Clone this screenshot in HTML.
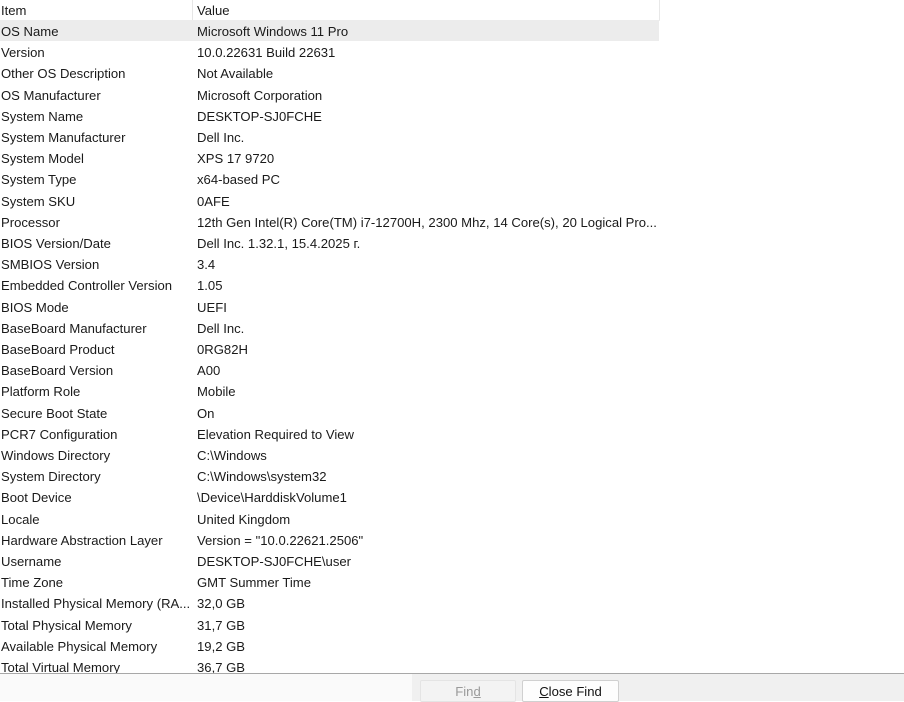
<!DOCTYPE html>
<html><head><style>
body{margin:0;width:904px;height:700px;background:#fff;overflow:hidden;position:relative;font-family:"Liberation Sans",sans-serif;font-size:13.1px;color:#1a1a1a}
.r{position:absolute;left:0;width:659px;height:21px;line-height:23px;white-space:nowrap}
.r span{position:absolute}
.a{left:1px}.b{left:197px}
.sel{background:#ececec}
#hdr{position:absolute;left:0;top:0;width:659px;height:20px;border-right:1px solid #e8e8e8;border-bottom:1px solid #f2f2f2}
#sep{position:absolute;left:192px;top:0;width:1px;height:20px;background:#e6e6e6}
#bar{position:absolute;left:0;top:673px;width:904px;height:27px;background:#f0f0f0;border-top:1px solid #a8a8a8}
.btn{position:absolute;top:6px;height:20px;line-height:21px;text-align:center;border:1px solid #d0d0d0;border-radius:2px;font-size:13.1px}
</style></head><body>
<div id="hdr"></div><div id="sep"></div>
<div class="r" style="top:-1px"><span class="a">Item</span><span class="b">Value</span></div>
<div class="r sel" style="top:20px"><span class="a">OS Name</span><span class="b">Microsoft Windows 11 Pro</span></div>
<div class="r" style="top:41.2px"><span class="a">Version</span><span class="b">10.0.22631 Build 22631</span></div>
<div class="r" style="top:62.4px"><span class="a">Other OS Description</span><span class="b">Not Available</span></div>
<div class="r" style="top:83.6px"><span class="a">OS Manufacturer</span><span class="b">Microsoft Corporation</span></div>
<div class="r" style="top:104.8px"><span class="a">System Name</span><span class="b">DESKTOP-SJ0FCHE</span></div>
<div class="r" style="top:126px"><span class="a">System Manufacturer</span><span class="b">Dell Inc.</span></div>
<div class="r" style="top:147.2px"><span class="a">System Model</span><span class="b">XPS 17 9720</span></div>
<div class="r" style="top:168.4px"><span class="a">System Type</span><span class="b">x64-based PC</span></div>
<div class="r" style="top:189.6px"><span class="a">System SKU</span><span class="b">0AFE</span></div>
<div class="r" style="top:210.8px"><span class="a">Processor</span><span class="b">12th Gen Intel(R) Core(TM) i7-12700H, 2300 Mhz, 14 Core(s), 20 Logical Pro...</span></div>
<div class="r" style="top:232px"><span class="a">BIOS Version/Date</span><span class="b">Dell Inc. 1.32.1, 15.4.2025 г.</span></div>
<div class="r" style="top:253.2px"><span class="a">SMBIOS Version</span><span class="b">3.4</span></div>
<div class="r" style="top:274.4px"><span class="a">Embedded Controller Version</span><span class="b">1.05</span></div>
<div class="r" style="top:295.6px"><span class="a">BIOS Mode</span><span class="b">UEFI</span></div>
<div class="r" style="top:316.8px"><span class="a">BaseBoard Manufacturer</span><span class="b">Dell Inc.</span></div>
<div class="r" style="top:338px"><span class="a">BaseBoard Product</span><span class="b">0RG82H</span></div>
<div class="r" style="top:359.2px"><span class="a">BaseBoard Version</span><span class="b">A00</span></div>
<div class="r" style="top:380.4px"><span class="a">Platform Role</span><span class="b">Mobile</span></div>
<div class="r" style="top:401.6px"><span class="a">Secure Boot State</span><span class="b">On</span></div>
<div class="r" style="top:422.8px"><span class="a">PCR7 Configuration</span><span class="b">Elevation Required to View</span></div>
<div class="r" style="top:444px"><span class="a">Windows Directory</span><span class="b">C:\Windows</span></div>
<div class="r" style="top:465.2px"><span class="a">System Directory</span><span class="b">C:\Windows\system32</span></div>
<div class="r" style="top:486.4px"><span class="a">Boot Device</span><span class="b">\Device\HarddiskVolume1</span></div>
<div class="r" style="top:507.6px"><span class="a">Locale</span><span class="b">United Kingdom</span></div>
<div class="r" style="top:528.8px"><span class="a">Hardware Abstraction Layer</span><span class="b">Version = "10.0.22621.2506"</span></div>
<div class="r" style="top:550px"><span class="a">Username</span><span class="b">DESKTOP-SJ0FCHE\user</span></div>
<div class="r" style="top:571.2px"><span class="a">Time Zone</span><span class="b">GMT Summer Time</span></div>
<div class="r" style="top:592.4px"><span class="a">Installed Physical Memory (RA...</span><span class="b">32,0 GB</span></div>
<div class="r" style="top:613.6px"><span class="a">Total Physical Memory</span><span class="b">31,7 GB</span></div>
<div class="r" style="top:634.8px"><span class="a">Available Physical Memory</span><span class="b">19,2 GB</span></div>
<div class="r" style="top:656px"><span class="a">Total Virtual Memory</span><span class="b">36,7 GB</span></div>
<div id="bar">
<div style="position:absolute;left:0;top:0;width:412px;height:27px;background:#fafafa"></div>
<div class="btn" style="left:420px;width:94px;color:#9a9a9a;background:#f3f3f3;border-color:#e4e4e4">Fin<u>d</u></div>
<div class="btn" style="left:522px;width:95px;background:#fdfdfd;color:#111"><u>C</u>lose Find</div>
</div>
</body></html>
